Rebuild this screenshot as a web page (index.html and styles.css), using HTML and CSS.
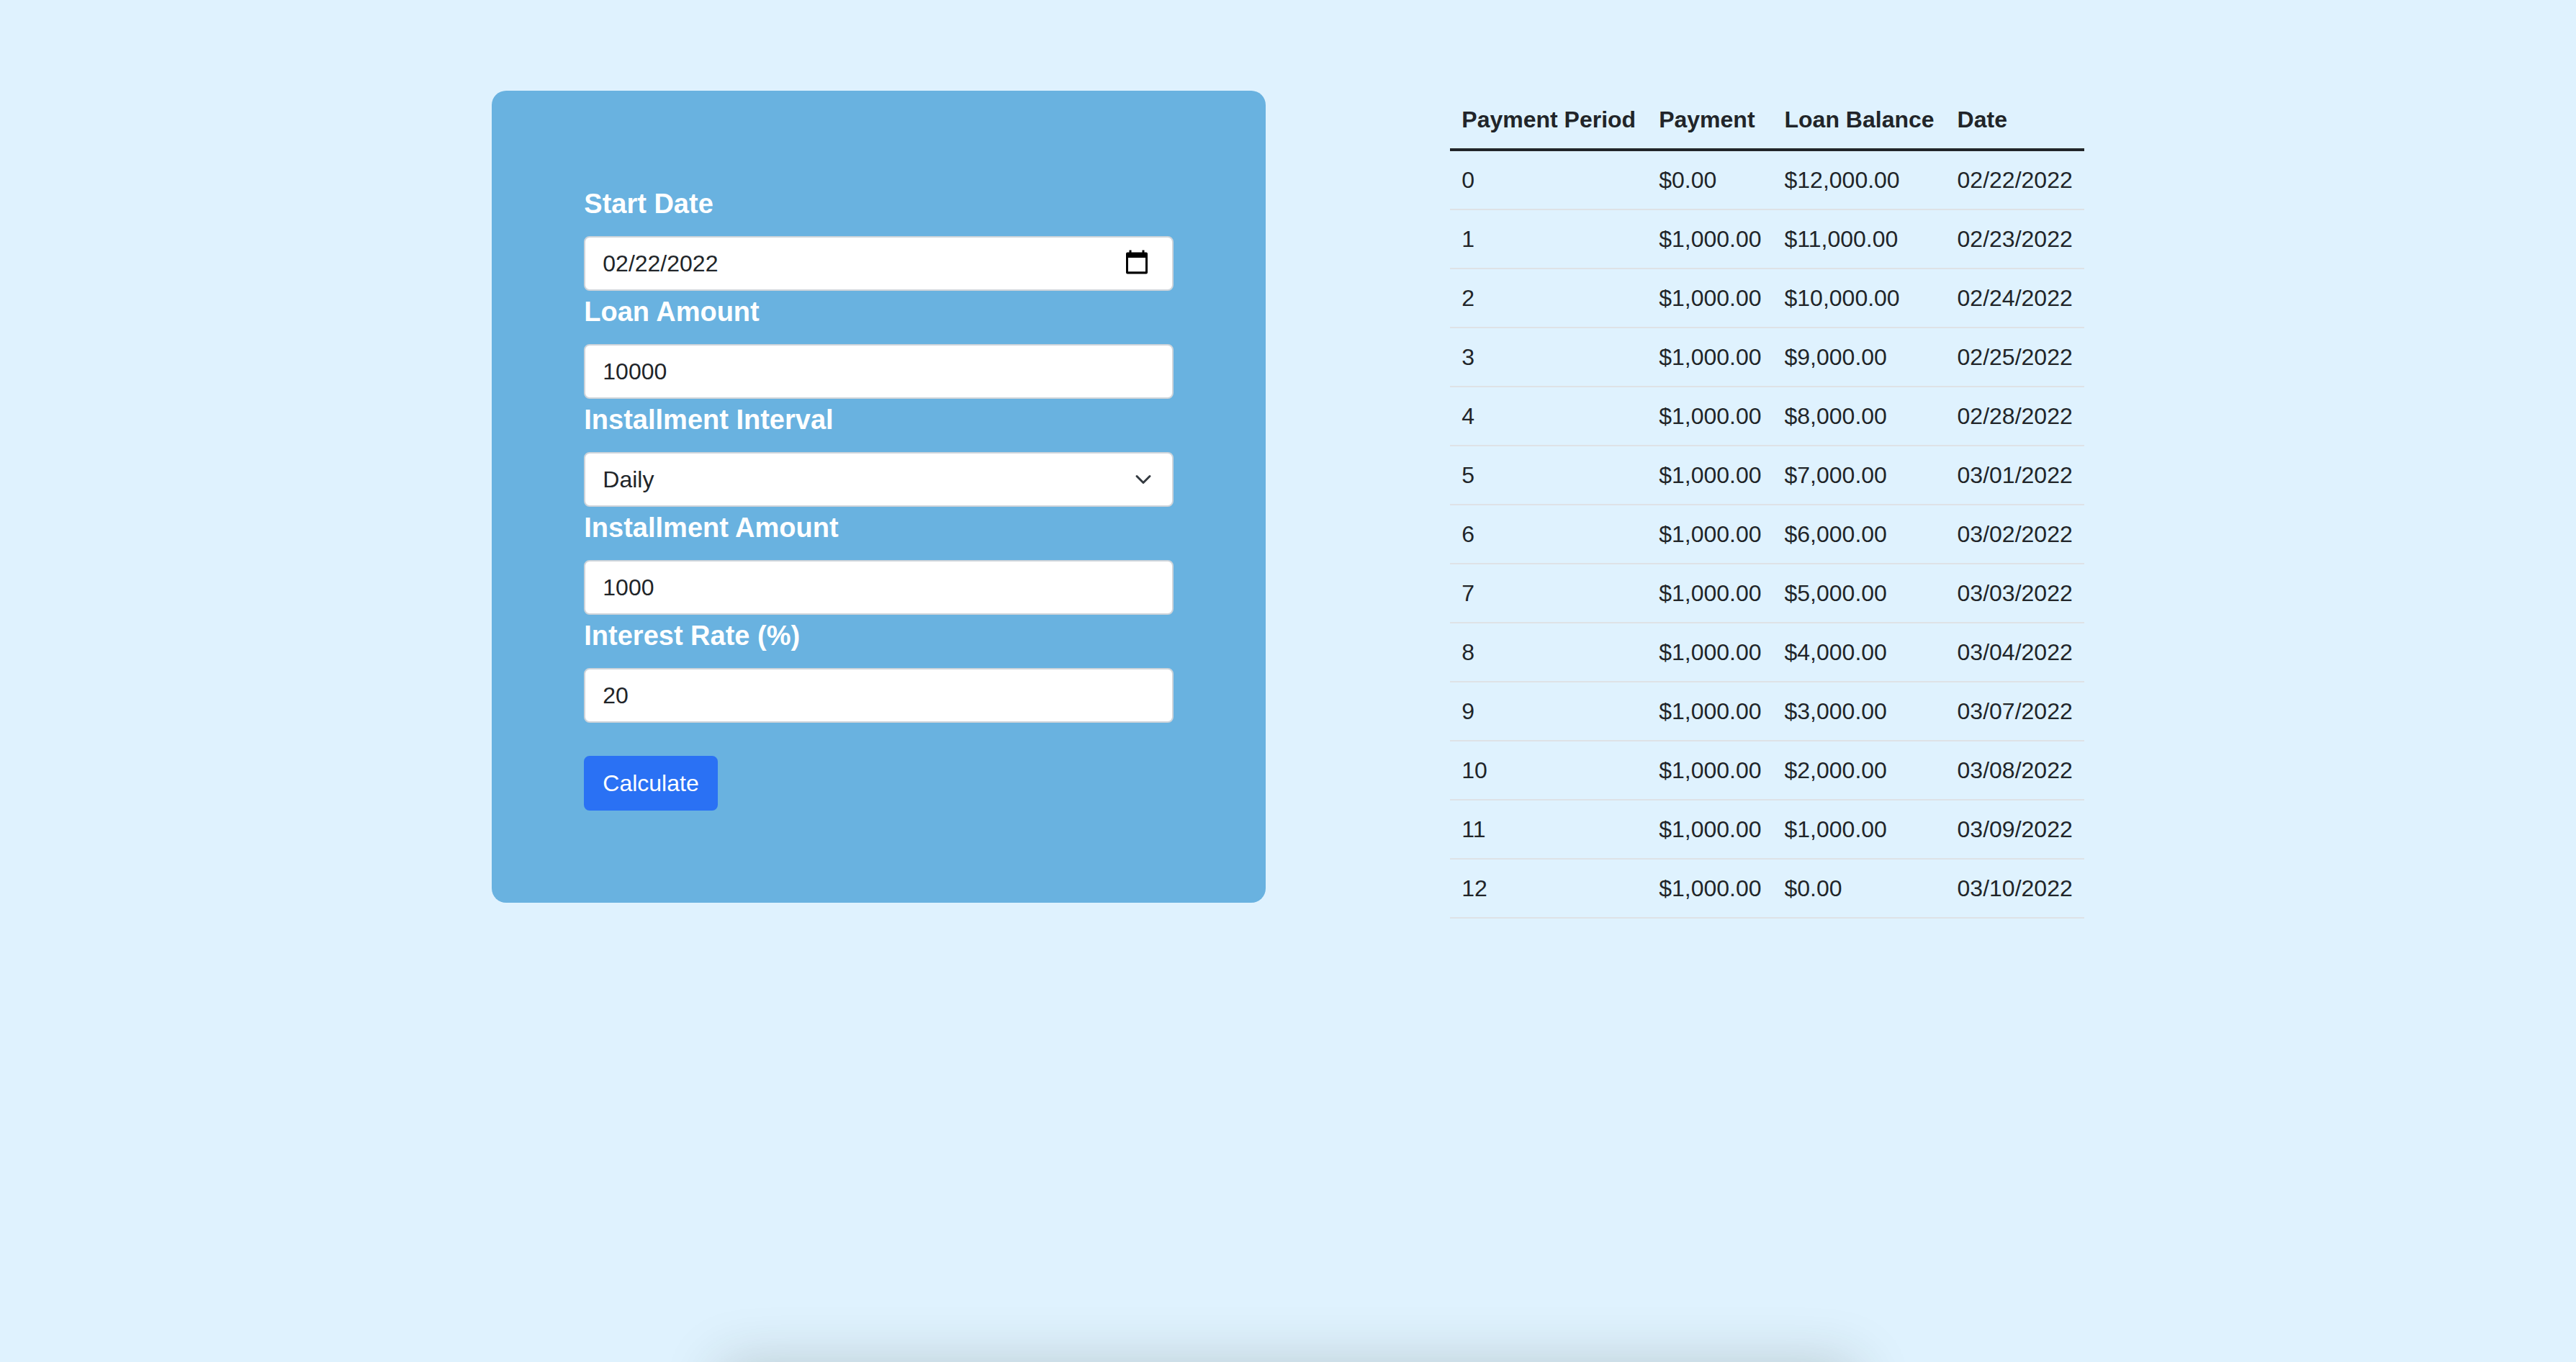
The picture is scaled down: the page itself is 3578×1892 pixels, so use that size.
FILE: index.html
```html
<!DOCTYPE html>
<html lang="en-US">
<head>
<meta charset="utf-8">
<meta name="viewport" content="width=device-width, initial-scale=1">
<title>Loan Calculator</title>
<link rel="stylesheet" href="styles.css">
</head>
<body>
<main class="page">
  <form class="panel">
    <label class="field-label" for="start-date">Start Date</label>
    <div class="control-wrap">
      <input class="control" id="start-date" type="date" value="2022-02-22">
      <svg class="calendar" viewBox="0 0 30 34" aria-hidden="true"><path fill-rule="evenodd" d="M4.5 0.4h3v3h15v-3h3v3H28a2 2 0 0 1 2 2v26.2a2 2 0 0 1-2 2H2a2 2 0 0 1-2-2V5.400a2 2 0 0 1 2-2h2.500zM3 11v19.300h24V11z"/></svg>
    </div>
    <label class="field-label" for="loan-amount">Loan Amount</label>
    <input class="control" id="loan-amount" type="text" inputmode="numeric" value="10000">
    <label class="field-label" for="interval">Installment Interval</label>
    <div class="control-wrap">
      <select class="control" id="interval">
        <option>Daily</option>
        <option>Weekly</option>
        <option>Monthly</option>
      </select>
      <svg class="chevron" viewBox="0 0 16 16" aria-hidden="true"><path d="M2 5l6 6 6-6" fill="none" stroke="#343a40" stroke-width="2" stroke-linecap="round" stroke-linejoin="round"/></svg>
    </div>
    <label class="field-label" for="installment">Installment Amount</label>
    <input class="control" id="installment" type="text" inputmode="numeric" value="1000">
    <label class="field-label" for="rate">Interest Rate (%)</label>
    <input class="control" id="rate" type="text" inputmode="numeric" value="20">
    <button class="submit" type="button">Calculate</button>
  </form>

  <table class="schedule">
    <thead>
      <tr><th scope="col">Payment Period</th><th scope="col">Payment</th><th scope="col">Loan Balance</th><th scope="col">Date</th></tr>
    </thead>
    <tbody>
      <tr><td>0</td><td>$0.00</td><td>$12,000.00</td><td>02/22/2022</td></tr>
      <tr><td>1</td><td>$1,000.00</td><td>$11,000.00</td><td>02/23/2022</td></tr>
      <tr><td>2</td><td>$1,000.00</td><td>$10,000.00</td><td>02/24/2022</td></tr>
      <tr><td>3</td><td>$1,000.00</td><td>$9,000.00</td><td>02/25/2022</td></tr>
      <tr><td>4</td><td>$1,000.00</td><td>$8,000.00</td><td>02/28/2022</td></tr>
      <tr><td>5</td><td>$1,000.00</td><td>$7,000.00</td><td>03/01/2022</td></tr>
      <tr><td>6</td><td>$1,000.00</td><td>$6,000.00</td><td>03/02/2022</td></tr>
      <tr><td>7</td><td>$1,000.00</td><td>$5,000.00</td><td>03/03/2022</td></tr>
      <tr><td>8</td><td>$1,000.00</td><td>$4,000.00</td><td>03/04/2022</td></tr>
      <tr><td>9</td><td>$1,000.00</td><td>$3,000.00</td><td>03/07/2022</td></tr>
      <tr><td>10</td><td>$1,000.00</td><td>$2,000.00</td><td>03/08/2022</td></tr>
      <tr><td>11</td><td>$1,000.00</td><td>$1,000.00</td><td>03/09/2022</td></tr>
      <tr><td>12</td><td>$1,000.00</td><td>$0.00</td><td>03/10/2022</td></tr>
    </tbody>
  </table>
</main>
<div class="bottom-shadow" aria-hidden="true"></div>
</body>
</html>
```
FILE: styles.css
```css
*,
*::before,
*::after {
  box-sizing: border-box;
}

body {
  margin: 0;
  background: #dff2fe;
  color: #212529;
  font-family: "Liberation Sans", Arial, sans-serif;
  font-size: 32px;
  line-height: 48px;
}

.page {
  display: flex;
  justify-content: center;
  align-items: flex-start;
  gap: 256px;
  padding: 126px 48px;
}

.panel {
  display: flex;
  flex: 0 1 1075px;
  flex-direction: column;
  padding: 128px;
  border-radius: 20px;
  background: #69b2e0;
}

.field-label {
  margin-bottom: 16px;
  color: #fff;
  font-size: 38px;
  font-weight: 700;
  line-height: 58px;
}

.control {
  display: block;
  width: 100%;
  height: 76px;
  margin: 0;
  padding: 12px 24px;
  border: 2px solid #ced4da;
  border-radius: 8px;
  background: #fff;
  color: #212529;
  font: inherit;
  appearance: none;
}

.control::-webkit-datetime-edit-month-field,
.control::-webkit-datetime-edit-day-field,
.control::-webkit-datetime-edit-year-field {
  padding: 0;
}

/* The native picker button stays clickable beneath the drawn icon */
.control::-webkit-calendar-picker-indicator {
  opacity: 0;
}

.control-wrap {
  position: relative;
}

.calendar {
  position: absolute;
  top: 19px;
  right: 36px;
  width: 30px;
  height: 34px;
  pointer-events: none;
}

.chevron {
  position: absolute;
  top: 26px;
  right: 30px;
  width: 24px;
  height: 24px;
  pointer-events: none;
}

.submit {
  align-self: flex-start;
  margin-top: 46px;
  padding: 12px 24px;
  border: 2px solid #2a71f4;
  border-radius: 8px;
  background: #2a71f4;
  color: #fff;
  font: inherit;
}

.schedule {
  border-spacing: 0;
  white-space: nowrap;
}

.schedule th,
.schedule td {
  padding: 16px;
  border-bottom: 2px solid #dee2e6;
  text-align: left;
}

.schedule th {
  border-bottom: 4px solid #212529;
}

/* Soft shade rising from below the lower edge of the window */
.bottom-shadow {
  position: fixed;
  top: 100%;
  left: 28%;
  width: 44%;
  height: 200px;
  box-shadow: 0 4px 80px rgba(40, 50, 30, 0.22);
  pointer-events: none;
}
```
